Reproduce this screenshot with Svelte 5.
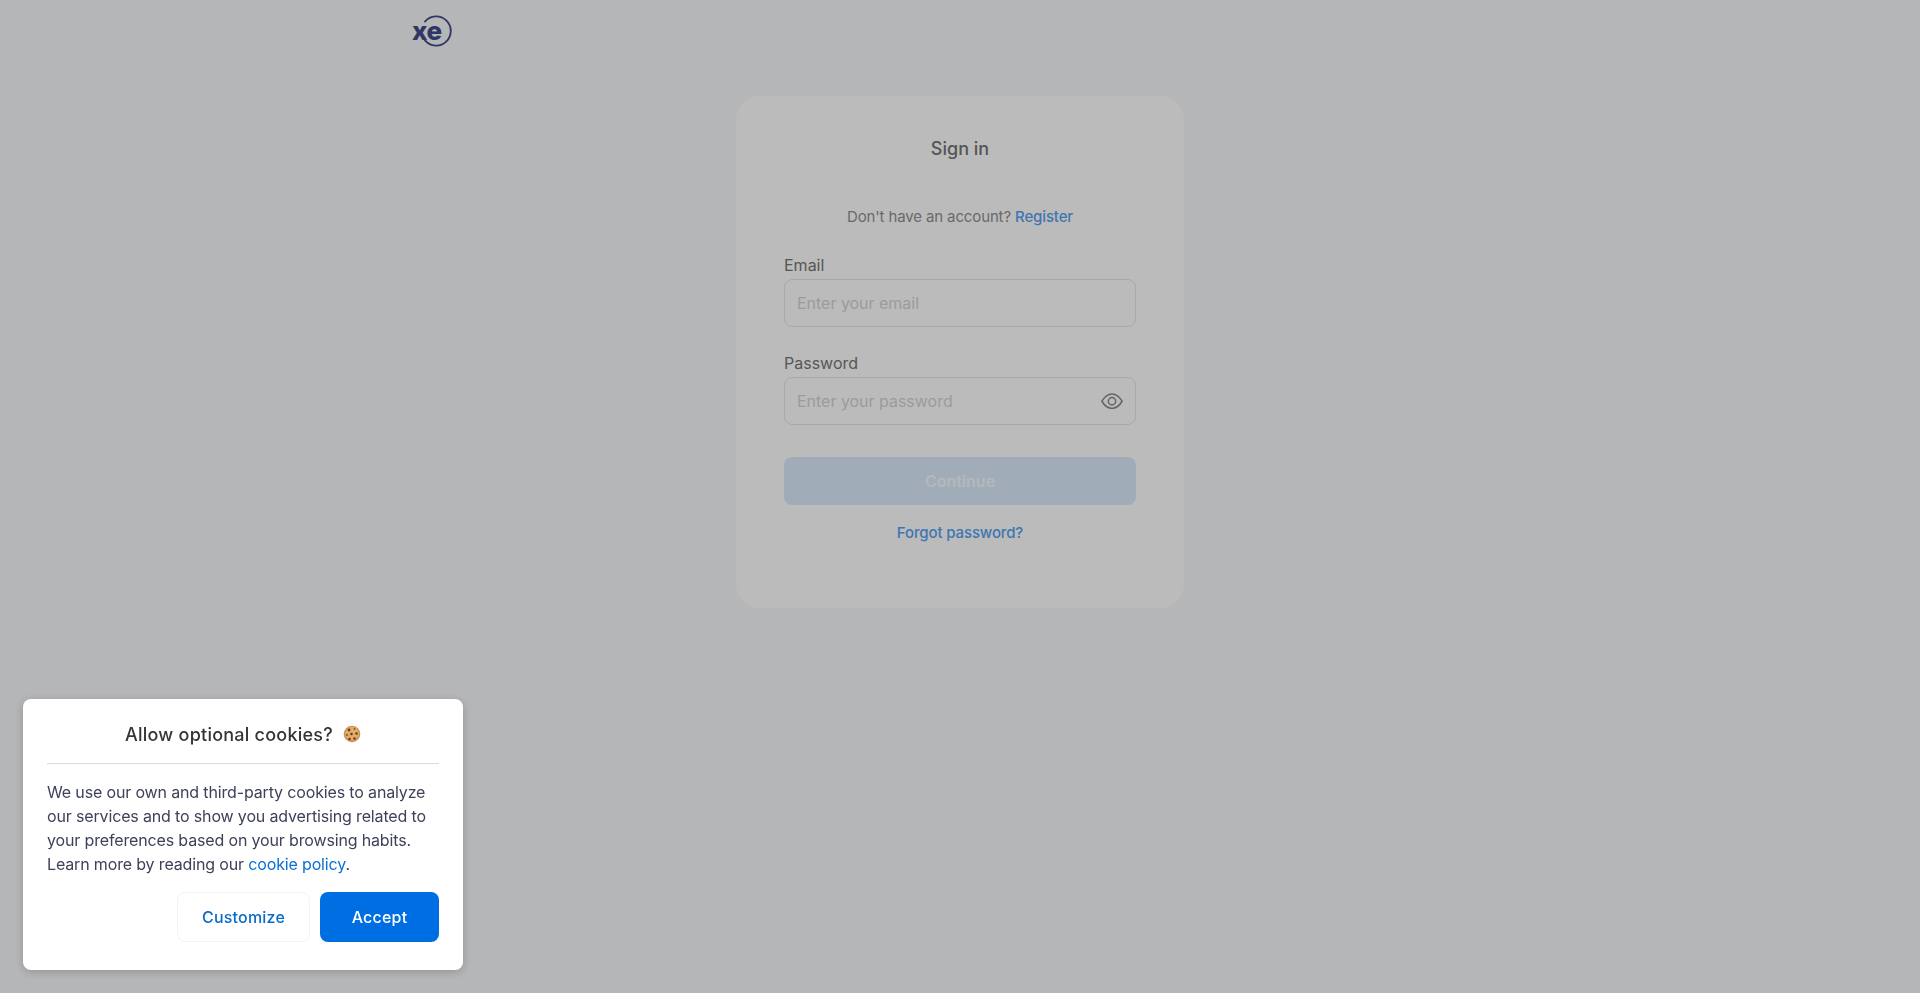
<script>
	const fields = [
		{ label: 'Email', placeholder: 'Enter your email', eye: false },
		{ label: 'Password', placeholder: 'Enter your password', eye: true }
	];
</script>

<div class="page">
	<header class="top">
		<svg class="logo" viewBox="0 0 40 32" width="40" height="32" aria-label="xe">
			<text x="0" y="25" class="logo-text">xe</text>
			<path d="M13 6.600 A14.600 14.600 0 1 1 13 25.400" fill="none" stroke="#444a88" stroke-width="1.900" stroke-linecap="round" />
		</svg>
	</header>

	<main class="main">
		<section class="card">
			<h1>Sign in</h1>
			<p class="register">Don't have an account? <a href="#register">Register</a></p>

			<form class="fields" on:submit|preventDefault>
				{#each fields as field}
					<div class="field">
						<span class="label">{field.label}</span>
						<div class="input">
							<span class="placeholder">{field.placeholder}</span>
							{#if field.eye}
								<svg viewBox="0 0 24 18" width="22" height="16.500" fill="none" stroke="#858585" stroke-width="1.600">
									<path d="M1 9C4 4 7.600 1.200 12 1.200S20 4 23 9C20 14 16.400 16.800 12 16.800S4 14 1 9Z" />
									<circle cx="12" cy="9" r="4" />
								</svg>
							{/if}
						</div>
					</div>
				{/each}
				<button class="continue" type="button" disabled>Continue</button>
			</form>

			<a class="forgot" href="#forgot">Forgot password?</a>
		</section>
	</main>
</div>

<div class="overlay"></div>

<aside class="cookies">
	<div class="cookies-title">
		<span>Allow optional cookies?</span>
		<svg viewBox="0 0 18 18" width="18" height="18" aria-hidden="true">
			<circle cx="9" cy="9" r="8.300" fill="#cf9350" />
			<circle cx="9" cy="8.500" r="6.800" fill="#e0ad6c" />
			<circle cx="6" cy="5" r="1.400" fill="#6a3f1e" />
			<circle cx="11.500" cy="4" r="0.900" fill="#7d5029" />
			<circle cx="13.500" cy="8.500" r="1.300" fill="#6a3f1e" />
			<circle cx="8.500" cy="9" r="1.300" fill="#6a3f1e" />
			<circle cx="4" cy="10" r="1" fill="#7d5029" />
			<circle cx="6.500" cy="14" r="1.300" fill="#6a3f1e" />
			<circle cx="11.500" cy="13.500" r="1.300" fill="#6a3f1e" />
		</svg>
	</div>
	<p>We use our own and third-party cookies to analyze our services and to show you advertising related to your preferences based on your browsing habits. Learn more by reading our <a href="#policy">cookie policy</a>.</p>
	<div class="actions">
		<button class="customize" type="button">Customize</button>
		<button class="accept" type="button">Accept</button>
	</div>
</aside>

<style>
	:global(body) {
		margin: 0;
		background: #f5f6f8;
		font-family: Inter, "Liberation Sans", sans-serif;
	}

	.page {
		height: 993px;
		overflow: hidden;
		background: #f5f6f8;
	}

	.top {
		width: 1096px;
		height: 96px;
		margin: 0 auto;
		padding-top: 15px;
		box-sizing: border-box;
	}

	.logo {
		display: block;
		overflow: visible;
	}

	.logo-text {
		font-family: Inter, sans-serif;
		font-weight: 800;
		font-size: 26px;
		letter-spacing: -0.500px;
		fill: #444a88;
	}

	.main {
		display: flex;
		justify-content: center;
	}

	.card {
		width: 448px;
		height: 512px;
		box-sizing: border-box;
		padding: 40px 48px 0;
		background: #fdfdfd;
		border-radius: 24px;
		display: flex;
		flex-direction: column;
	}

	h1 {
		margin: 0;
		font-size: 18px;
		line-height: 25px;
		font-weight: 500;
		text-align: center;
		color: #737373;
	}

	.register {
		margin: 45px 0 0;
		font-size: 15px;
		line-height: 22px;
		letter-spacing: -0.130px;
		text-align: center;
		color: #8f8f8f;
	}

	a {
		text-decoration: none;
	}

	.register a,
	.forgot {
		color: #559fef;
		font-weight: 500;
	}

	.fields {
		display: flex;
		flex-direction: column;
		gap: 26px;
		margin-top: 27px;
	}

	.field {
		display: flex;
		flex-direction: column;
		gap: 4px;
	}

	.label {
		font-size: 16px;
		line-height: 20px;
		color: #757575;
	}

	.input {
		height: 48px;
		box-sizing: border-box;
		padding: 0 12px;
		border: 1px solid #e4e4e4;
		border-radius: 8px;
		display: flex;
		align-items: center;
		justify-content: space-between;
	}

	.placeholder {
		font-size: 16px;
		letter-spacing: -0.020px;
		color: #d2d2d4;
	}

	.continue {
		height: 48px;
		margin-top: 6px;
		border: 0;
		border-radius: 8px;
		background: #dae9fa;
		color: #f4f8fd;
		font: 600 16px Inter, sans-serif;
	}

	.forgot {
		margin-top: 17px;
		font-size: 15px;
		line-height: 22px;
		letter-spacing: -0.130px;
		text-align: center;
	}

	.overlay {
		position: fixed;
		inset: 0;
		background: rgba(0, 0, 0, 0.26);
	}

	.cookies {
		position: fixed;
		left: 23px;
		top: 699px;
		width: 440px;
		height: 271px;
		box-sizing: border-box;
		padding: 0 24px;
		background: #fff;
		border-radius: 8px;
		box-shadow: 0 2px 10px rgba(0, 0, 0, 0.2);
	}

	.cookies-title {
		height: 58px;
		padding-top: 6px;
		display: flex;
		align-items: center;
		justify-content: center;
		gap: 10px;
		border-bottom: 1px solid #dcdcdf;
		font-size: 18px;
		font-weight: 500;
		letter-spacing: 0.240px;
		color: #333338;
	}

	.cookies p {
		margin: 16px 0 0;
		font-size: 16px;
		line-height: 24px;
		letter-spacing: -0.150px;
		color: #3e4259;
	}

	.cookies p a {
		color: #0a6fd6;
	}

	.actions {
		display: flex;
		justify-content: flex-end;
		gap: 10px;
		margin-top: 16px;
	}

	.actions button {
		height: 50px;
		border-radius: 8px;
		font: 500 16px Inter, sans-serif;
		letter-spacing: 0.200px;
	}

	.customize {
		width: 133px;
		background: #fff;
		border: 1px solid #f3f3f5;
		color: #0a6bc9;
	}

	.accept {
		width: 119px;
		background: #006ee3;
		border: 0;
		color: #fff;
	}
</style>
